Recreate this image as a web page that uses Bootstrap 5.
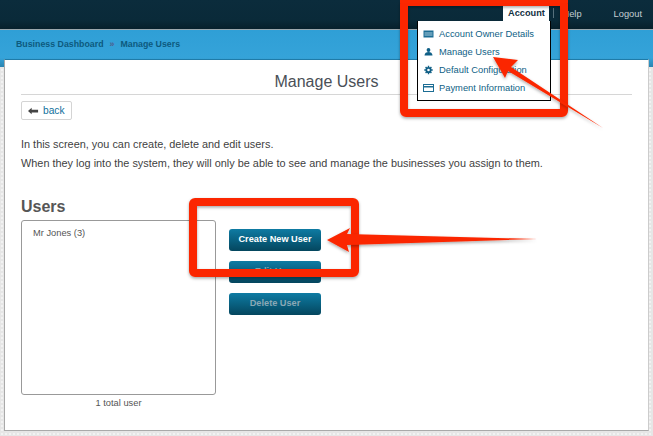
<!DOCTYPE html>
<html lang="en">
<head>
<meta charset="utf-8">
<title>Manage Users</title>
<link href="https://cdn.jsdelivr.net/npm/bootstrap@5.3.0/dist/css/bootstrap.min.css" rel="stylesheet">
<style>
html,body{height:436px;overflow:hidden}
body{background:#e6e6e6 radial-gradient(#f2f2f2 35%,transparent 40%) 0 0/4px 4px;font-family:"Liberation Sans",Arial,sans-serif;font-size:10.5px;color:#444;position:relative}
.topbar{height:29px;background:linear-gradient(#0b2c3c,#0a2a39 70%,#06202c);border-bottom:1px solid #9aa7ad;box-sizing:content-box;padding-right:11px}
.toplink{color:#c4ced3;font-size:9.3px;line-height:28px}
.help-link{margin-left:8px}
.logout-link{margin-left:32px}
.acct-tab{background:#fff;color:#12303f;font-weight:700;font-size:9.2px;width:46px;height:15px;line-height:15px;margin-top:6px;text-align:center}
.navsep{width:1px;height:10px;background:#56707c;margin:8px 0 0 4px}
.crumbbar{height:37px;background:linear-gradient(#2f9fd6,#35a3d9 75%,#2b84b0);padding:0 0 0 16px;line-height:28px;font-weight:700;font-size:8.8px;color:#0d5a7e}
.crumbsep{color:#4f5f8f;margin:0 6px}
.sheet{position:absolute;left:4px;top:59px;width:645px;height:372px;background:#fff;border:1px solid #a9a9a9;border-top-color:#1f7ba8;border-right-color:#ccc;padding:0 16px}
.sheet-title{font-size:16px;font-weight:400;color:#4a4f57;text-align:center;margin:0;height:35px;line-height:44px;border-bottom:1px solid #d6d6d6}
.backbtn{display:inline-flex;align-items:center;gap:4px;width:51px;height:19px;margin-top:6px;border:1px solid #d4d4d4;border-radius:2px;background:#fff;color:#0f6f9c;font-size:10.2px;padding:0 0 0 6px}
.intro{margin:15px 0 0;font-size:10.9px;line-height:19px;color:#3f3f3f}
.users-h{font-size:16px;font-weight:700;color:#565656;margin:0;line-height:20px}
.lower{margin-top:24px}
.listcol{width:195px}
.userbox{height:175px;border:1px solid #999;border-radius:3px;padding:7px 11px;font-size:9.3px;color:#555;margin-top:3px;line-height:11px}
.total{text-align:center;font-size:9.3px;color:#555;margin-top:3px;line-height:11px}
.actions{margin:32px 0 0 13px;gap:10px;width:92px}
.actbtn{display:block;width:92px;height:22px;padding:0 0 2px;border:0;border-radius:3px;background:linear-gradient(#0e7ba3,#04465e);color:#fff;font-weight:700;font-size:9.2px;line-height:18px;text-align:center}
.actbtn.dim{color:#8aa8b5}
.acct-menu{position:absolute;left:417px;top:21px;width:134px;height:80px;background:#fff;border:1px solid #000;border-top:0;padding:4px 0 0 5px;margin:0;list-style:none}
.acct-menu li{display:flex;align-items:center;gap:5px;height:18px;font-size:9.35px;color:#0f5f86;white-space:nowrap}
.notes{position:absolute;left:0;top:0;width:653px;height:436px;pointer-events:none}
</style>
</head>
<body>
<div class="topbar d-flex justify-content-end">
  <div class="acct-tab">Account</div>
  <div class="navsep"></div>
  <div class="toplink help-link">Help</div>
  <div class="toplink logout-link">Logout</div>
</div>
<div class="crumbbar">Business Dashboard<span class="crumbsep">»</span>Manage Users</div>
<div class="sheet">
  <h1 class="sheet-title">Manage Users</h1>
  <a class="backbtn text-decoration-none" href="#"><svg width="11" height="8" viewBox="0 0 12 8"><path d="M0 4 4 .5V2.500H11V5.500H4V7.500Z" fill="#444"/></svg>back</a>
  <p class="intro">In this screen, you can create, delete and edit users.<br>When they log into the system, they will only be able to see and manage the businesses you assign to them.</p>
  <div class="lower d-flex">
    <div class="listcol">
      <h2 class="users-h">Users</h2>
      <div class="userbox">Mr Jones (3)</div>
      <div class="total">1 total user</div>
    </div>
    <div class="actions d-flex flex-column">
      <button class="actbtn" type="button">Create New User</button>
      <button class="actbtn dim" type="button">Edit User</button>
      <button class="actbtn dim" type="button">Delete User</button>
    </div>
  </div>
</div>
<ul class="acct-menu">
  <li><svg width="11" height="10" viewBox="0 0 11 10"><path fill="#1c6d94" d="M.5 1.500h10v7H.5z"/><path fill="#a9cddd" d="M1.500 3.500h8v1h-8zM1.500 5.500h8v1h-8z"/></svg>Account Owner Details</li>
  <li><svg width="11" height="10" viewBox="0 0 11 10"><circle cx="5.500" cy="3" r="1.900" fill="#0f5f86"/><path fill="#0f5f86" d="M1.500 8.500C1.500 6 3.500 5 5.500 5s4 1 4 3.500z"/></svg>Manage Users</li>
  <li><svg width="11" height="10" viewBox="0 0 11 10"><circle cx="5.500" cy="5" r="2.200" fill="none" stroke="#0f5f86" stroke-width="1.800"/><path stroke="#0f5f86" stroke-width="1.400" d="M5.500 .8v1.600M5.500 7.600v1.600M1.300 5h1.600M8.100 5h1.600M2.600 2.100l1.100 1.100M7.300 6.800l1.100 1.100M8.400 2.100 7.300 3.200M3.700 6.800 2.600 7.900"/></svg>Default Configuration</li>
  <li><svg width="11" height="10" viewBox="0 0 11 10"><rect x=".5" y="1.500" width="10" height="7" fill="#fff" stroke="#1c6d94"/><path fill="#1c6d94" d="M1 3h9v1.500H1z"/></svg>Payment Information</li>
</ul>
<svg class="notes" viewBox="0 0 653 436" aria-hidden="true">
  <defs><filter id="sh" x="-10%" y="-10%" width="120%" height="130%"><feDropShadow dx="0" dy="1.500" stdDeviation="1.500" flood-color="#000" flood-opacity=".35"/></filter></defs>
  <rect x="404" y="2" width="160" height="111" rx="2" fill="none" stroke="#fb2800" stroke-width="8" filter="url(#sh)"/>
  <path d="M400 0V3H568V0z" fill="#fb2800"/>
  <rect x="193" y="202" width="162" height="71" rx="2" fill="none" stroke="#fb2800" stroke-width="8" filter="url(#sh)"/>
  <path d="M603 128 511 67 518 60 493 57 505 78 508 71Z" fill="#fb2800" filter="url(#sh)"/>
  <path d="M537 239 347 234 350 228 327 240 349 252 347 245Z" fill="#fb2800" filter="url(#sh)"/>
</svg>
<script src="https://cdn.jsdelivr.net/npm/bootstrap@5.3.0/dist/js/bootstrap.bundle.min.js"></script>
</body>
</html>
